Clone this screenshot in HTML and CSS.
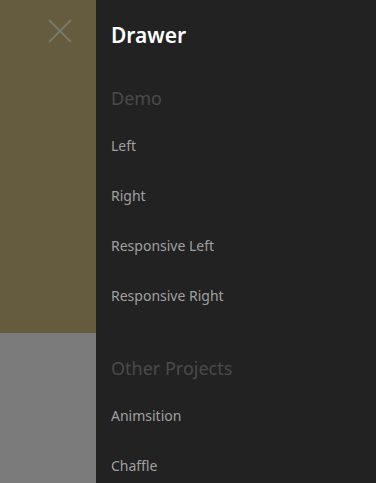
FILE: index.html
```html
<!DOCTYPE html>
<html>
<head>
<meta charset="utf-8">
<link rel="stylesheet" href="styles.css">
</head>
<body>
<div class="page">
  <div class="backdrop">
    <div class="backdrop-top">
      <button class="close" aria-label="Close">
        <svg width="24" height="24" viewBox="0 0 24 24"><path d="M1 1 L23 23 M23 1 L1 23" stroke="#7a7866" stroke-width="2" fill="none"/></svg>
      </button>
    </div>
    <div class="backdrop-bottom"></div>
  </div>
  <nav class="drawer">
    <h1 class="title">Drawer</h1>
    <h2 class="section">Demo</h2>
    <a class="item">Left</a>
    <a class="item">Right</a>
    <a class="item">Responsive Left</a>
    <a class="item">Responsive Right</a>
    <h2 class="section section-gap">Other Projects</h2>
    <a class="item">Animsition</a>
    <a class="item">Chaffle</a>
  </nav>
</div>
</body>
</html>
```
FILE: styles.css
```css
html, body { margin: 0; padding: 0; height: 100%; overflow: hidden; }
body { font-family: "Noto Sans", "Open Sans", sans-serif; background: #222; }
.page { display: flex; height: 483px; }
.backdrop { width: 96px; display: flex; flex-direction: column; }
.backdrop-top { height: 333px; background: #655c3f; display: flex; justify-content: flex-end; align-items: flex-start; }
.backdrop-bottom { flex: 1; background: #7b7b7b; }
.close { background: none; border: 0; padding: 0; margin: 19px 24px 0 0; width: 24px; height: 24px; }
.close svg { display: block; }
.drawer { flex: 1; background: #222222; padding: 0 15px; display: flex; flex-direction: column; }
.title { margin: 20px 0 0; font-size: 21px; font-weight: 600; color: #fff; line-height: 30px; }
.section { margin: 36px 0 0; font-size: 18px; font-weight: 400; color: #4a4a4a; line-height: 24px; }
.section-gap { margin-top: 45px; }
.item { display: block; font-size: 14px; color: #a0a0a0; line-height: 20px; margin-top: 25px; margin-bottom: 5px; }
.section + .item { margin-top: 26px; }
```
